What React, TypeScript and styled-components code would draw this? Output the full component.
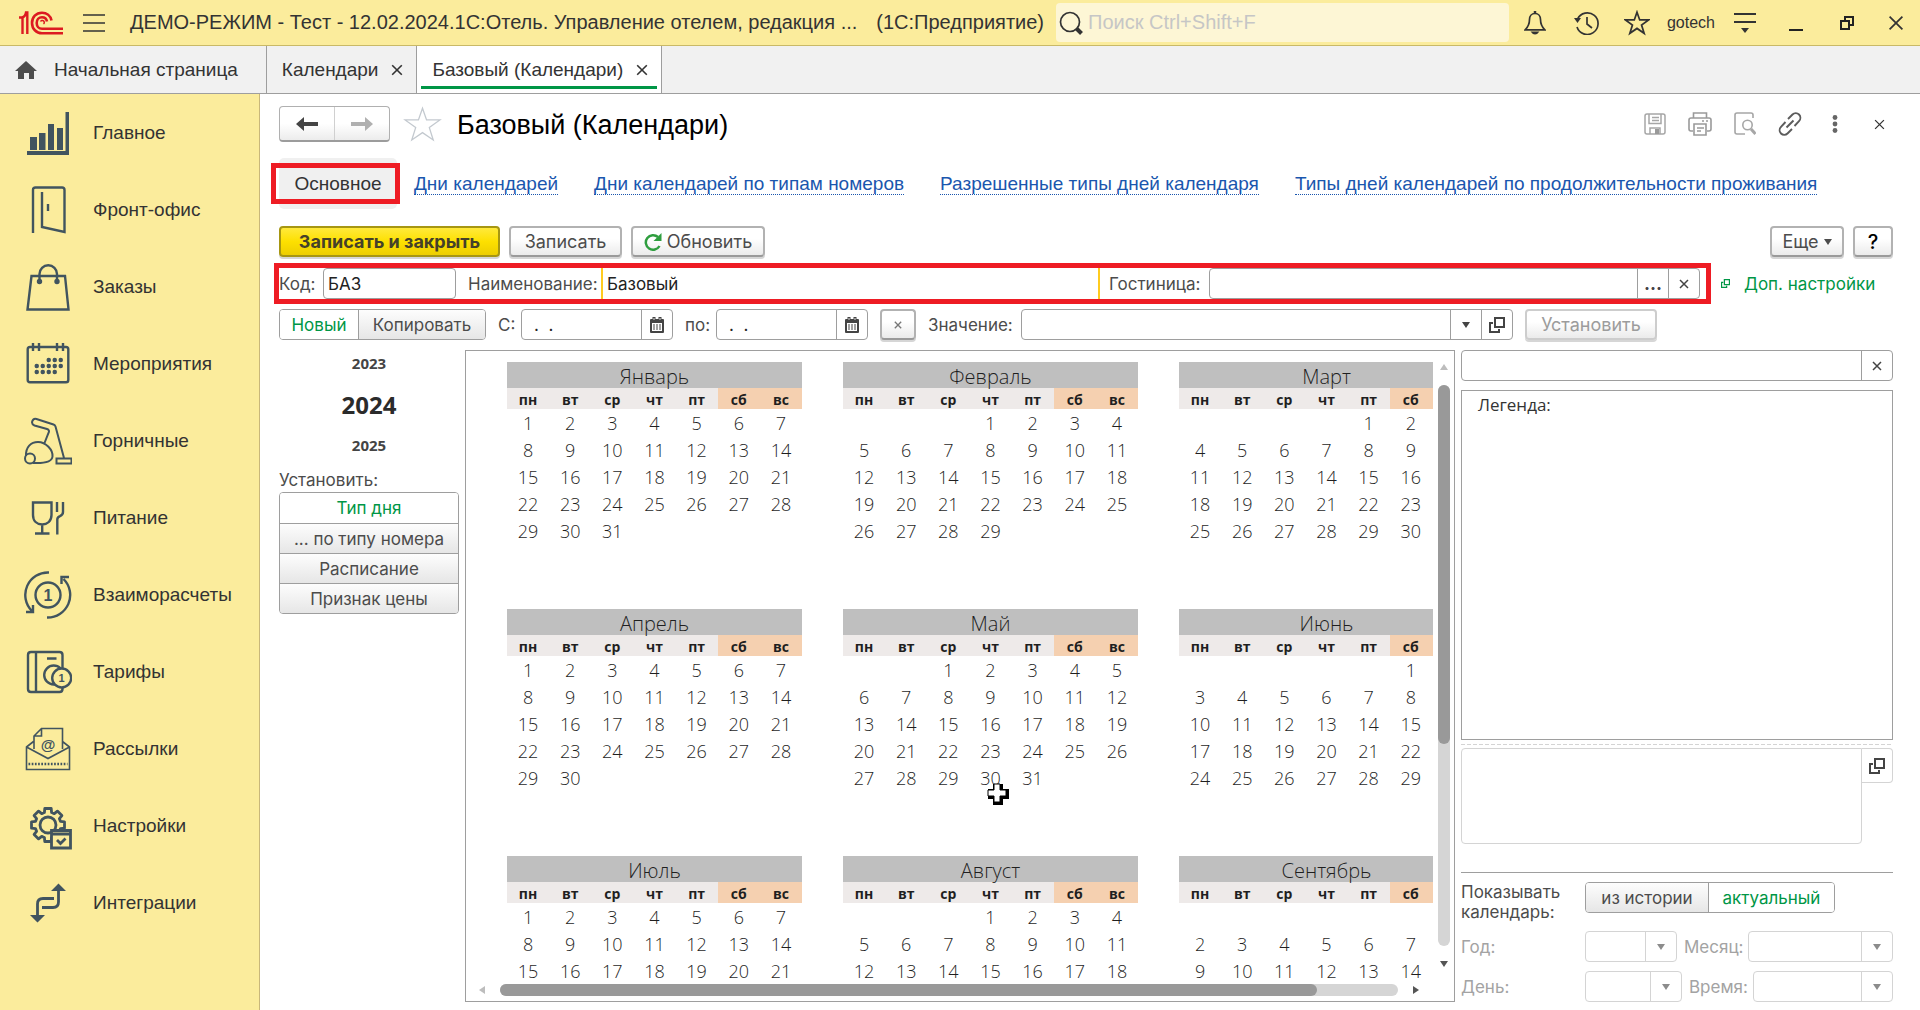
import React from 'react';
import styled, { createGlobalStyle, css } from 'styled-components';

const ui = '"Liberation Sans", Arial, sans-serif';
const form = 'Inter, "Liberation Sans", sans-serif';
const sheet = '"Open Sans", "Noto Sans", sans-serif';

const c = {
  yellow: '#fbec9c',
  line: '#9e9e9e',
  soft: '#d4d4d4',
  text: '#333333',
  label: '#4c4c4c',
  green: '#009646',
  icon: '#41545f',
  red: '#ee1c24',
};

const GlobalStyle = createGlobalStyle`
  *, *::before, *::after { box-sizing: border-box; }
  body { margin: 0; background: #fff; color: ${c.text}; font-family: ${ui}; font-size: 19px; }
  button, input, select, textarea { font: inherit; color: inherit; margin: 0; }
  button { cursor: pointer; }
`;

const Page = styled.div`
  display: flex;
  flex-direction: column;
  height: 100vh;
  min-height: 900px;
  overflow: hidden;
`;

/* ---------- title bar ---------- */

const TitleBar = styled.header`
  display: flex;
  align-items: center;
  flex: none;
  height: 46px;
  padding-left: 18px;
  background: ${c.yellow};
  border-bottom: 1px solid #c9b967;
`;

const IconButton = styled.button<{ $w?: number }>`
  display: flex;
  flex: none;
  align-items: center;
  justify-content: center;
  width: ${(p) => p.$w ?? 51}px;
  height: 36px;
  padding: 0;
  border: 0;
  background: none;
  color: ${c.text};
`;

const AppTitle = styled.div`
  display: flex;
  flex: none;
  gap: 19px;
  margin: 0 12px 0 6px;
  font-size: 20px;
  white-space: nowrap;
`;

const Search = styled.label`
  display: flex;
  flex: 1;
  align-items: center;
  gap: 3px;
  min-width: 0;
  height: 39px;
  margin-right: 1px;
  padding-left: 3px;
  border-radius: 4px;
  background: #fdf6d5;
`;

const SearchInput = styled.input`
  flex: 1;
  min-width: 0;
  border: 0;
  outline: 0;
  background: none;
  font-size: 20px;
  &::placeholder { color: #c6c6c6; opacity: 1; }
`;

const UserName = styled.button`
  padding: 0 4px;
  border: 0;
  background: none;
  font-size: 16px;
`;

/* ---------- tabs ---------- */

const TabBar = styled.nav`
  display: flex;
  flex: none;
  height: 48px;
  background: #f1f1f1;
  border-bottom: 1px solid ${c.line};
`;

const Tab = styled.div<{ $active?: boolean; $home?: boolean }>`
  display: flex;
  align-items: center;
  gap: ${(p) => (p.$home ? 17 : 10)}px;
  padding: ${(p) => (p.$home ? '0 28px 0 15px' : '0 13px 0 15px')};
  border-right: 1px solid ${c.line};
  ${(p) => p.$active && css`
    background: #fff;
    box-shadow: inset 4px 0 #fff, inset -4px 0 #fff, inset 0 -4px #fff, inset 0 -7px ${c.green};
  `}
`;

const TabButton = styled.button`
  padding: 0;
  border: 0;
  background: none;
  font-size: 19px;
  white-space: nowrap;
`;

const TabClose = styled(TabButton)`
  display: flex;
  padding: 4px 0 4px 3px;
`;

/* ---------- side menu ---------- */

const Columns = styled.div`
  display: flex;
  flex: 1;
  min-height: 0;
`;

const SideMenu = styled.nav`
  flex: none;
  width: 260px;
  background: ${c.yellow};
  border-right: 1px solid #c9b77a;
`;

const SideItem = styled.a`
  display: flex;
  align-items: center;
  gap: 21px;
  height: 77px;
  padding-left: 24px;
  color: ${c.text};
  text-decoration: none;
  & svg { flex: none; }
`;

/* ---------- main area ---------- */

const Main = styled.main`
  display: flex;
  flex: 1;
  flex-direction: column;
  min-width: 0;
  padding: 12px 27px 8px 19px;
  font-family: ${form};
  font-size: 17px;
  color: ${c.label};
`;

const Heading = styled.div`
  display: flex;
  flex: none;
  align-items: center;
  height: 36px;
  margin-right: -9px;
  font-family: ${ui};
`;

const History = styled.div`
  display: flex;
  width: 111px;
  height: 36px;
  border: 1px solid #b0b0b0;
  border-bottom: 2px solid #9c9c9c;
  border-radius: 4px;
  background: linear-gradient(#fff 50%, #ececec);
`;

const HistoryButton = styled.button`
  display: flex;
  flex: 1;
  align-items: center;
  justify-content: center;
  padding: 0;
  border: 0;
  background: none;
  && + && { border-left: 1px solid #d0d0d0; }
`;

const Title = styled.h1`
  flex: 1;
  margin: 0 0 0 2px;
  padding-top: 2px;
  color: #000;
  font-size: 27px;
  font-weight: 400;
  line-height: 36px;
  white-space: nowrap;
`;

const LinkRow = styled.nav`
  display: flex;
  flex: none;
  align-items: center;
  gap: 36px;
  height: 51px;
  margin-top: 16px;
  font-family: ${ui};
  font-size: 19px;
  white-space: nowrap;
`;

const CurrentLink = styled.span`
  position: relative;
  width: 118px;
  margin-right: -19px;
  border-radius: 5px;
  background: #f0f0f0;
  color: #333;
  line-height: 51px;
  text-align: center;
  &::after {
    content: '';
    position: absolute;
    inset: 5px -3px 5px -8px;
    border: 5px solid ${c.red};
  }
`;

const SectionLink = styled.a`
  margin-top: 2px;
  border-bottom: 1px dotted #1a56ae;
  color: #1a56ae;
  line-height: 20px;
  text-decoration: none;
`;

const Toolbar = styled.div`
  display: flex;
  flex: none;
  align-items: flex-start;
  gap: 9px;
  height: 32px;
  margin-top: 17px;
`;

const Spacer = styled.span`
  flex: 1;
`;

const Button = styled.button<{ $w?: number; $primary?: boolean; $help?: boolean }>`
  display: inline-flex;
  flex: none;
  align-items: center;
  justify-content: center;
  gap: 5px;
  width: ${(p) => (p.$w ? `${p.$w}px` : 'auto')};
  height: 31px;
  padding: 0 4px;
  border: 2px solid #b2b2b2;
  border-bottom-color: #9a9a9a;
  border-radius: 4px;
  background: linear-gradient(#fff 40%, #ebebeb);
  box-shadow: 0 2px 0 #d6d6d6;
  color: ${(p) => (p.$help ? '#000' : c.label)};
  font-size: ${(p) => (p.$help ? 20 : 18)}px;
  font-weight: ${(p) => (p.$help ? 500 : 400)};
  white-space: nowrap;
  ${(p) => p.$primary && css`
    border-color: #a69612;
    background: linear-gradient(#ffe93c, #fde000 50%, #edce00);
    color: #45412a;
    font-weight: 700;
  `}
  &:disabled {
    border-color: #cdcdcd;
    color: #9c9c9c;
    cursor: default;
  }
`;

const FormRow = styled.div`
  display: flex;
  flex: none;
  align-items: center;
  height: 31px;
  margin-top: 10px;
`;

const Marked = styled.div`
  display: flex;
  flex: 1;
  align-items: center;
  min-width: 0;
  height: 31px;
  padding-right: 6px;
  outline: 5px solid ${c.red};
`;

const Label = styled.label<{ $w: number; $muted?: boolean }>`
  flex: none;
  width: ${(p) => p.$w}px;
  white-space: nowrap;
  color: ${(p) => (p.$muted ? '#a3a3a3' : 'inherit')};
`;

const Field = styled.div<{ $w?: number; $muted?: boolean; $required?: boolean }>`
  display: flex;
  flex: ${(p) => (p.$w ? 'none' : '1')};
  width: ${(p) => (p.$w ? `${p.$w}px` : 'auto')};
  min-width: 0;
  height: 31px;
  border: 1px solid ${(p) => (p.$muted ? c.soft : c.line)};
  border-radius: 4px;
  background: #fff;
  ${(p) => p.$required && css`
    border: solid #ffcb1f;
    border-width: 0 2px;
    border-radius: 0;
  `}
`;

const Input = styled.input`
  flex: 1;
  width: 0;
  min-width: 0;
  padding: 0 4px;
  border: 0;
  outline: 0;
  background: none;
  color: #222;
`;

const DateInput = styled(Input)`
  padding: 0 12px;
`;

const Select = styled.select`
  flex: 1;
  width: 0;
  min-width: 0;
  padding: 0 6px;
  border: 0;
  outline: 0;
  background: none;
  appearance: none;
`;

const FieldButton = styled.button<{ $muted?: boolean }>`
  display: flex;
  flex: none;
  align-items: center;
  justify-content: center;
  width: 31px;
  padding: 0;
  border: 0;
  border-left: 1px solid ${(p) => (p.$muted ? c.soft : c.line)};
  background: none;
  color: ${(p) => (p.$muted ? '#8c8c8c' : '#444')};
`;

const Ellipsis = styled.span`
  font-size: 18px;
  font-weight: 700;
`;

const Segments = styled.div<{ $vertical?: boolean }>`
  display: flex;
  flex: none;
  flex-direction: ${(p) => (p.$vertical ? 'column' : 'row')};
  overflow: hidden;
  border: 1px solid ${c.line};
  border-radius: 4px;
  && > * + * { border-${(p) => (p.$vertical ? 'top' : 'left')}: 1px solid ${c.line}; }
`;

const Segment = styled.button<{ $w?: number; $on?: boolean }>`
  width: ${(p) => (p.$w ? `${p.$w}px` : 'auto')};
  height: ${(p) => (p.$w ? 29 : 30)}px;
  padding: 0;
  border: 0;
  background: ${(p) => (p.$on ? '#fff' : 'linear-gradient(#fdfdfd, #e6e6e6)')};
  color: ${(p) => (p.$on ? c.green : c.label)};
  white-space: nowrap;
`;

const MoreLink = styled.a`
  display: flex;
  flex: none;
  align-items: center;
  gap: 14px;
  width: 187px;
  padding-left: 15px;
  color: ${c.green};
  line-height: 28px;
  text-decoration: none;
  white-space: nowrap;
`;

/* ---------- body ---------- */

const Body = styled.div`
  display: grid;
  flex: 1;
  grid-template-columns: 180px minmax(0, 1fr) 432px;
  gap: 6px;
  min-height: 0;
  margin-top: 10px;
`;

const YearColumn = styled.div`
  display: flex;
  flex-direction: column;
`;

const Year = styled.button<{ $current?: boolean }>`
  height: ${(p) => (p.$current ? 56 : 26)}px;
  padding: 0;
  border: 0;
  background: none;
  color: ${(p) => (p.$current ? '#2b2b2b' : '#444')};
  font-family: ${sheet};
  font-size: ${(p) => (p.$current ? 24 : 15)}px;
  font-weight: 700;
`;

const GroupLabel = styled.div`
  margin: 12px 0 2px;
  line-height: 20px;
`;

const CalendarPanel = styled.section`
  display: grid;
  grid-template-columns: minmax(0, 1fr) 21px;
  grid-template-rows: minmax(0, 1fr) 17px;
  min-height: 0;
  border: 1px solid ${c.line};
`;

const Viewport = styled.div`
  position: relative;
  overflow: hidden;
  padding: 11px 0 0 41px;
`;

const Months = styled.div`
  display: grid;
  grid-template-columns: repeat(3, 295px);
  grid-auto-rows: 209px;
  gap: 38px 41px;
  align-items: start;
  font-family: ${sheet};
`;

const MonthTable = styled.table`
  width: 295px;
  border-collapse: collapse;
  border-spacing: 0;
  table-layout: fixed;
  color: #1f1f1f;
  & caption {
    height: 26px;
    background: #bfbfbf;
    font-size: 20px;
    font-weight: 300;
    line-height: 29px;
  }
`;

const WeekDay = styled.th<{ $weekend: boolean }>`
  height: 21px;
  padding: 2px 0 0;
  background: ${(p) => (p.$weekend ? '#f5d0b0' : '#eeeae9')};
  font-size: 14px;
  font-weight: 700;
  line-height: 19px;
`;

const Day = styled.td`
  height: 27px;
  padding: 2px 0 0;
  font-size: 18px;
  font-weight: 300;
  line-height: 25px;
  text-align: center;
`;

const Pointer = styled.svg`
  position: absolute;
  left: 521px;
  top: 432px;
`;

const ScrollBar = styled.div<{ $horizontal?: boolean }>`
  display: flex;
  flex-direction: ${(p) => (p.$horizontal ? 'row' : 'column')};
  align-items: ${(p) => (p.$horizontal ? 'flex-start' : 'center')};
  gap: 14px;
  padding: ${(p) => (p.$horizontal ? '0 13px 0 12px' : '12px 0 16px')};
  & > svg { flex: none; }
`;

const Track = styled.div<{ $horizontal?: boolean; $share: number }>`
  flex: 1;
  width: ${(p) => (p.$horizontal ? 'auto' : '12px')};
  height: ${(p) => (p.$horizontal ? '12px' : 'auto')};
  border-radius: 6px;
  background: #d5d5d5;
  &::before {
    content: '';
    display: block;
    width: ${(p) => (p.$horizontal ? `${p.$share}%` : '12px')};
    height: ${(p) => (p.$horizontal ? '12px' : `${p.$share}%`)};
    border-radius: 6px;
    background: #999;
  }
`;

const SidePanel = styled.aside`
  display: flex;
  flex-direction: column;
  min-height: 0;
`;

const Legend = styled.div`
  flex: 1;
  margin-top: 9px;
  padding: 1px 16px;
  border: 1px solid ${c.line};
  color: #333;
  font-family: ${sheet};
  line-height: 26px;
`;

const Splitter = styled.div`
  flex: none;
  height: 1px;
  margin: 4px 0 3px;
  background: repeating-linear-gradient(90deg, ${c.soft} 0 4px, transparent 4px 6px);
`;

const NoteRow = styled.div`
  display: flex;
  flex: none;
  align-items: flex-start;
  height: 96px;
`;

const Note = styled.textarea`
  flex: 1;
  height: 96px;
  border: 1px solid ${c.soft};
  border-radius: 4px 0 4px 4px;
  outline: 0;
  resize: none;
`;

const NoteButton = styled.button`
  display: flex;
  align-items: center;
  justify-content: center;
  width: 31px;
  height: 35px;
  padding: 0;
  border: 1px solid ${c.soft};
  border-left: 0;
  border-radius: 0 4px 4px 0;
  background: none;
  color: #444;
`;

const Rule = styled.hr`
  flex: none;
  width: 100%;
  height: 1px;
  margin: 28px 0 9px;
  border: 0;
  background: ${c.line};
`;

const ShowRow = styled.div`
  display: flex;
  flex: none;
  align-items: flex-start;
  height: 49px;
`;

const ShowLabel = styled.div`
  width: 124px;
  line-height: 20px;
`;

const ParamRow = styled.div`
  display: flex;
  flex: none;
  align-items: center;
  height: 31px;
  & + & { margin-top: 9px; }
`;

const NamePad = styled.span`
  padding-left: 12px;
`;

const HotelPad = styled.span`
  padding-left: 9px;
`;

const GapLabel = styled(Label)`
  padding-left: 12px;
`;

const ParamLabel = styled(Label)`
  padding-left: 7px;
`;

const ClearButton = styled(Button)`
  margin: 0 12px;
  color: #777;
`;

const ApplyButton = styled(Button)`
  margin-left: 12px;
`;

const ScrollArrow = styled.span`
  display: flex;
  align-items: center;
  height: 12px;
`;

const FilterField = styled(Field)`
  flex: none;
`;

/* ---------- icons ---------- */

type Dir = 'up' | 'down' | 'left' | 'right';
const turn: Record<Dir, number> = { down: 0, left: 90, up: 180, right: 270 };

const Caret = ({ dir = 'down', color = 'currentColor', size = 8 }: { dir?: Dir; color?: string; size?: number }) => (
  <svg width={size} height={size} viewBox="0 0 8 8">
    <path d="M0 1h8L4 7z" fill={color} transform={`rotate(${turn[dir]} 4 4)`} />
  </svg>
);

const Cross = ({ size = 12, width = 2 }: { size?: number; width?: number }) => (
  <svg width={size} height={size} viewBox="0 0 12 12" fill="none" stroke="currentColor" strokeWidth={width}>
    <path d="M1.2 1.2l9.6 9.6M10.8 1.2l-9.6 9.6" />
  </svg>
);

const OpenIcon = ({ size = 16, width = 2 }: { size?: number; width?: number }) => (
  <svg width={size} height={size} viewBox="0 0 16 16" fill="none" stroke="currentColor" strokeWidth={width}>
    <path d="M6 1h9v9H6zM4 6H1v9h9v-3" />
  </svg>
);

const CalendarIcon = () => (
  <svg width="14" height="16" viewBox="0 0 14 16">
    <path d="M1 2h12q1 0 1 1v12q0 1-1 1H1q-1 0-1-1V3q0-1 1-1z" fill="#444" />
    <path d="M2 6h10v8H2z" fill="#fff" />
    <path d="M2.500 0h3v4h-3zM8.500 0h3v4h-3z" fill="#444" />
    <path d="M4 1v2M10 1v2" stroke="#ddd" strokeWidth="1" />
    <path d="M3 8h2M6 8h2M9 8h2M3 10h2M6 10h2M9 10h2M3 12h2M6 12h2M9 12h2" stroke="#444" strokeWidth="1.2" />
  </svg>
);

const Logo = () => (
  <svg width="46" height="24" viewBox="0 0 46 24" fill="none" stroke="#dc1a21" strokeWidth="2.600">
    <path d="M1 6.500h3.500V23M4 6.500C6 6 7.500 4.500 8 1.500h1.300V23" strokeWidth="2.400" />
    <path d="M33.500 9.500C32.500 4.500 28.500 1.700 24 1.700c-6 0-10 4.500-10 10.200 0 5.800 4.300 10.300 10 10.300h21" />
    <path d="M29 10.500c-.5-2.700-2.500-4.300-5-4.300-3.200 0-5.300 2.500-5.300 5.700 0 3.300 2.200 5.800 5.300 5.800h21" />
    <path d="M22.500 10.500a2 2 0 1 1 3 2.500" strokeWidth="1.500" />
  </svg>
);

const Burger = () => (
  <svg width="22" height="18" viewBox="0 0 22 18" stroke="#333" strokeWidth="1.600">
    <path d="M0 1h22M0 9h22M0 17h22" />
  </svg>
);

const SearchIcon = () => (
  <svg width="24" height="24" viewBox="0 0 24 24" fill="none" stroke="#333">
    <circle cx="11" cy="11" r="9.500" strokeWidth="1.700" />
    <path d="M17.500 17.500l5 5" strokeWidth="4" />
  </svg>
);

const Bell = () => (
  <svg width="22" height="24" viewBox="0 0 22 24" fill="none" stroke="#333" strokeWidth="1.700">
    <path d="M11 2.500c-3.500 0-5.500 2.500-5.500 6 0 5.500-1.500 7.500-4.300 10.300h19.600c-2.800-2.800-4.300-4.800-4.300-10.300 0-3.500-2-6-5.500-6z" />
    <path d="M11 0v3" strokeWidth="2.500" />
    <path d="M6.500 20.500h9q-2 3-4.500 3t-4.500-3z" fill="#333" stroke="none" />
  </svg>
);

const Clock = () => (
  <svg width="25" height="24" viewBox="0 0 25 24" fill="none" stroke="#333" strokeWidth="1.700">
    <path d="M3.500 8A10.800 10.800 0 1 1 3 16" />
    <path d="M0 7h7l-3.500 5z" fill="#333" stroke="none" />
    <path d="M13 6v7l5 4" />
  </svg>
);

const StarIcon = ({ size, color, width }: { size: number; color: string; width: number }) => (
  <svg width={size} height={size} viewBox="0 0 24 24" fill="none" stroke={color} strokeWidth={width}>
    <path d="M12 2l2.500 7.200h8.200l-6.500 4.700 2.400 7.600L12 17l-6.600 4.500 2.400-7.600-6.500-4.700h8.200z" />
  </svg>
);

const ViewMenu = () => (
  <svg width="22" height="22" viewBox="0 0 22 22" fill="none" stroke="#333" strokeWidth="1.800">
    <path d="M0 2h22M0 10h22" />
    <path d="M7 16h8l-4 5z" fill="#333" stroke="none" />
  </svg>
);

const Minimize = () => (
  <svg width="14" height="16" viewBox="0 0 14 16"><path d="M0 14h14v2H0z" fill="#222" /></svg>
);

const Restore = () => (
  <svg width="14" height="14" viewBox="0 0 14 14" fill="none" stroke="#222" strokeWidth="2">
    <path d="M1 5h8v8H1zM5 5V1h8v8H9" />
  </svg>
);

const Home = () => (
  <svg width="22" height="18" viewBox="0 0 22 18"><path d="M11 0l11 10h-3v8h-5v-6H9v6H3v-8H0z" fill="#4d4d4d" /></svg>
);

const Arrow = ({ back }: { back?: boolean }) => (
  <svg width="22" height="14" viewBox="0 0 22 14">
    <path d="M0 7l8-7v5h14v4H8v5z" fill={back ? '#444' : '#b0b0b0'} transform={back ? undefined : 'rotate(180 11 7)'} />
  </svg>
);

const Save = () => (
  <svg width="22" height="22" viewBox="0 0 22 22" fill="none" stroke="#a6a6a6" strokeWidth="1.500">
    <path d="M3 1h16q2 0 2 2v16q0 2-2 2H3q-2 0-2-2V3q0-2 2-2z" />
    <path d="M5 1v9.500h12V1M8 4.500h7M8 7.500h7M6 21v-6h10v6" />
    <path d="M11 16h4v5h-4z" fill="#999" stroke="none" />
  </svg>
);

const Print = () => (
  <svg width="24" height="24" viewBox="0 0 24 24" fill="none" stroke="#9a9a9a" strokeWidth="1.600">
    <path d="M5.500 6V1h13v5M5 19H3q-2 0-2-2V8q0-2 2-2h18q2 0 2 2v9q0 2-2 2h-2" />
    <path d="M6 12h12v11H6zM9 16h7M9 19h4M14 9h2M18 9h2" />
  </svg>
);

const Preview = () => (
  <svg width="22" height="24" viewBox="0 0 22 24" fill="none" stroke="#a6a6a6" strokeWidth="1.600">
    <path d="M19 6V3q0-2-2-2H3Q1 1 1 3v17q0 2 2 2h8" />
    <circle cx="13.500" cy="13" r="4.700" />
    <path d="M17 17l4.500 5" strokeWidth="3" />
  </svg>
);

const Chain = () => (
  <svg width="24" height="24" viewBox="0 0 24 24" fill="none" stroke="#5c5c5c" strokeWidth="1.900">
    <path d="M10 7l4.500-4.500a4.500 4.500 0 0 1 6.500 0 4.800 4.800 0 0 1 0 6.700L16.500 14" />
    <path d="M14 17l-4.500 4.500a4.500 4.500 0 0 1-6.500 0 4.800 4.800 0 0 1 0-6.700L7.500 10" />
    <path d="M8.500 15.500l7-7" />
  </svg>
);

const Dots = () => (
  <svg width="6" height="18" viewBox="0 0 6 18" fill="#666">
    <circle cx="3" cy="2.500" r="2.400" /><circle cx="3" cy="9" r="2.400" /><circle cx="3" cy="15.500" r="2.400" />
  </svg>
);

const Refresh = () => (
  <svg width="18" height="18" viewBox="0 0 18 18" fill="none" stroke="#2f9e3f" strokeWidth="2.500">
    <path d="M15.500 13A7.300 7.300 0 1 1 14 4" />
    <path d="M17.500 0v8h-8z" fill="#2f9e3f" stroke="none" />
  </svg>
);

const BigIcon = ({ children, width = 2.400 }: { children: React.ReactNode; width?: number }) => (
  <svg width="48" height="48" viewBox="0 0 48 48" fill="none" stroke={c.icon} strokeWidth={width}>{children}</svg>
);

const GlyphText = ({ x, y, size, children }: { x: number; y: number; size: number; children: string }) => (
  <text x={x} y={y} fontSize={size} fontWeight="700" fontFamily="Liberation Sans, sans-serif" textAnchor="middle" fill={c.icon} stroke="none">
    {children}
  </text>
);

const gear = Array.from({ length: 8 }, (_, i) => {
  const p = (r: number, deg: number) => {
    const a = ((i * 45 + deg - 90) * Math.PI) / 180;
    return `${(24 + r * Math.cos(a)).toFixed(1)} ${(23 + r * Math.sin(a)).toFixed(1)}`;
  };
  return `${i ? 'L' : 'M'}${p(16.8, -11)}L${p(16.8, 11)}L${p(13, 16)}L${p(13, 29)}`;
}).join('') + 'z';

const menu: { name: string; icon: React.ReactNode }[] = [
  {
    name: 'Главное',
    icon: (
      <BigIcon>
        <path d="M3 42h38.500V3H45v43H3zM6 28h7v13H6zM15 24h6.500v17H15zM24 15h6v26h-6zM33 19h6v22h-6z" fill={c.icon} stroke="none" />
      </BigIcon>
    ),
  },
  { name: 'Фронт-офис', icon: <BigIcon><path d="M9 47V4q0-2.500 2.500-2.500H38q2.500 0 2.500 2.500v42L18 41V6M24 18v7" /></BigIcon> },
  {
    name: 'Заказы',
    icon: (
      <BigIcon>
        <path d="M7.500 13h33.500L44.500 46.500h-41z" />
        <path d="M15.500 19v-8a8.700 8.700 0 0 1 17.500 0v8" />
        <circle cx="15.500" cy="18.500" r="1.500" /><circle cx="33" cy="18.500" r="1.500" />
      </BigIcon>
    ),
  },
  {
    name: 'Мероприятия',
    icon: (
      <BigIcon>
        <path d="M6 7h36q2.300 0 2.300 2.300V40q0 2.300-2.300 2.300H6q-2.300 0-2.300-2.300V9.300Q3.700 7 6 7zM9 3v8M15 3v8M33 3v8M39 3v8" />
        <path d="M24.700 20h14M12.700 26h26M12.700 32h20" strokeWidth="4.400" strokeDasharray="0.100 5.900" strokeLinecap="round" />
      </BigIcon>
    ),
  },
  {
    name: 'Горничные',
    icon: (
      <BigIcon width={2}>
        <path d="M2 39c-.5-9 5-14 12-14 8 0 15 8 14.500 14.500C28 45 20 46.500 9 46" />
        <circle cx="6" cy="41.500" r="5" />
        <path d="M40 41L31.500 9.500q-.5-1.500-2-2L12.500 2C8.500 1 6 6.500 10.500 8.500L23 12q3 1 1.500 4L20.500 26M32.500 41.500h15v5h-15z" />
      </BigIcon>
    ),
  },
  {
    name: 'Питание',
    icon: (
      <BigIcon>
        <path d="M9 8.500h18.500V21c0 6-4 9.500-9.300 9.500S9 27 9 21zM18.200 30.500V39M11 39.500h14.500M33 8v10M39 8v10c0 2-1.500 3.500-3 4.200q-2.700 1-2.700 3.300v15" />
      </BigIcon>
    ),
  },
  {
    name: 'Взаиморасчеты',
    icon: (
      <BigIcon>
        <path d="M25 1.500A22.500 22.500 0 0 0 8 40M23 46.500A22.500 22.500 0 0 0 39.500 8M2 41h7v-7M45 6h-7.500v7" />
        <circle cx="24" cy="24" r="12.500" />
        <GlyphText x={24} y={30} size={16}>1</GlyphText>
      </BigIcon>
    ),
  },
  {
    name: 'Тарифы',
    icon: (
      <BigIcon>
        <path d="M7 4h28.500q3 0 3 3v34q0 3-3 3H7q-3 0-3-3V7q0-3 3-3zM12 4v40M23 10.500h9.500" />
        <circle cx="29.700" cy="27" r="9.500" fill={c.yellow} /><circle cx="37.700" cy="30" r="9.500" fill={c.yellow} />
        <GlyphText x={37.5} y={34} size={11}>1</GlyphText>
      </BigIcon>
    ),
  },
  {
    name: 'Рассылки',
    icon: (
      <BigIcon width={1.600}>
        <path d="M9.500 16.500L2.500 22v22.500h43V22l-7-5.500M2.500 22L24 33.500 45.500 22M10 24V11l7.500-7.500h21V24M10 11h7.500V3.500" />
        <path d="M4.500 39h39" strokeWidth="2.500" strokeDasharray="1.700 1.500" />
        <GlyphText x={24} y={25} size={15}>@</GlyphText>
      </BigIcon>
    ),
  },
  {
    name: 'Настройки',
    icon: (
      <BigIcon width={2.800}>
        <path d={gear} strokeLinejoin="round" />
        <circle cx="24" cy="23" r="8" />
        <path d="M27.500 28.500h19v17.500h-19zM27.500 32h19" fill={c.yellow} />
        <path d="M33 38l3.500 3.500 5-5" />
      </BigIcon>
    ),
  },
  {
    name: 'Интеграции',
    icon: (
      <BigIcon width={2.800}>
        <path d="M34.500 11v12q0 5.500-5.500 5.500H18M13.500 37V25q0-5.500 5.500-5.500h11" />
        <path d="M34.500 4.500L42 12H27zM13.500 43.500L6 36h15z" fill={c.icon} stroke="none" />
      </BigIcon>
    ),
  },
];

/* ---------- calendar data ---------- */

const weekDays = ['пн', 'вт', 'ср', 'чт', 'пт', 'сб', 'вс'];

const months: { name: string; offset: number; days: number }[] = [
  { name: 'Январь', offset: 0, days: 31 },
  { name: 'Февраль', offset: 3, days: 29 },
  { name: 'Март', offset: 4, days: 31 },
  { name: 'Апрель', offset: 0, days: 30 },
  { name: 'Май', offset: 2, days: 31 },
  { name: 'Июнь', offset: 5, days: 30 },
  { name: 'Июль', offset: 0, days: 31 },
  { name: 'Август', offset: 3, days: 31 },
  { name: 'Сентябрь', offset: 6, days: 30 },
];

const Month = ({ name, offset, days }: { name: string; offset: number; days: number }) => {
  const weeks = Math.ceil((offset + days) / 7);
  return (
    <MonthTable>
      <caption>{name}</caption>
      <thead>
        <tr>{weekDays.map((d, i) => <WeekDay key={d} $weekend={i > 4} scope="col">{d}</WeekDay>)}</tr>
      </thead>
      <tbody>
        {Array.from({ length: weeks }, (_, w) => (
          <tr key={w}>
            {weekDays.map((d, i) => {
              const n = w * 7 + i - offset + 1;
              return <Day key={d}>{n > 0 && n <= days ? n : null}</Day>;
            })}
          </tr>
        ))}
      </tbody>
    </MonthTable>
  );
};

const DateField = ({ id }: { id: string }) => (
  <Field $w={152}>
    <DateInput id={id} defaultValue=".  ." />
    <FieldButton aria-label="Выбрать дату"><CalendarIcon /></FieldButton>
  </Field>
);

const Combo = ({ id, w }: { id: string; w?: number }) => (
  <Field $w={w} $muted>
    <Select id={id} disabled><option value="" /></Select>
    <FieldButton $muted disabled aria-label="Открыть список"><Caret /></FieldButton>
  </Field>
);

export default function App() {
  return (
    <Page>
      <GlobalStyle />
      <TitleBar>
        <Logo />
        <IconButton $w={60} aria-label="Меню"><Burger /></IconButton>
        <AppTitle>
          <span>ДЕМО-РЕЖИМ - Тест - 12.02.2024.1С:Отель. Управление отелем, редакция ...</span>
          <span>(1С:Предприятие)</span>
        </AppTitle>
        <Search>
          <SearchIcon />
          <SearchInput placeholder="Поиск Ctrl+Shift+F" aria-label="Поиск" />
        </Search>
        <IconButton aria-label="Уведомления"><Bell /></IconButton>
        <IconButton aria-label="История"><Clock /></IconButton>
        <IconButton aria-label="Избранное"><StarIcon size={26} color="#333" width={1.600} /></IconButton>
        <UserName>gotech</UserName>
        <IconButton aria-label="Вид"><ViewMenu /></IconButton>
        <IconButton aria-label="Свернуть"><Minimize /></IconButton>
        <IconButton aria-label="Восстановить"><Restore /></IconButton>
        <IconButton $w={48} aria-label="Закрыть"><Cross size={16} width={1.300} /></IconButton>
      </TitleBar>

      <TabBar>
        <Tab $home><Home /><TabButton>Начальная страница</TabButton></Tab>
        <Tab>
          <TabButton>Календари</TabButton>
          <TabClose aria-label="Закрыть вкладку"><Cross size={12} width={1.600} /></TabClose>
        </Tab>
        <Tab $active>
          <TabButton>Базовый (Календари)</TabButton>
          <TabClose aria-label="Закрыть вкладку"><Cross size={12} width={1.600} /></TabClose>
        </Tab>
      </TabBar>

      <Columns>
        <SideMenu>
          {menu.map((m) => <SideItem key={m.name} href="#">{m.icon}{m.name}</SideItem>)}
        </SideMenu>

        <Main>
          <Heading>
            <History>
              <HistoryButton aria-label="Назад"><Arrow back /></HistoryButton>
              <HistoryButton aria-label="Вперед"><Arrow /></HistoryButton>
            </History>
            <IconButton $w={65} aria-label="В избранное"><StarIcon size={39} color="#c3c9cf" width={0.800} /></IconButton>
            <Title>Базовый (Календари)</Title>
            <IconButton $w={45} aria-label="Сохранить"><Save /></IconButton>
            <IconButton $w={45} aria-label="Печать"><Print /></IconButton>
            <IconButton $w={45} aria-label="Просмотр"><Preview /></IconButton>
            <IconButton $w={45} aria-label="Ссылка"><Chain /></IconButton>
            <IconButton $w={45} aria-label="Еще"><Dots /></IconButton>
            <IconButton $w={45} aria-label="Закрыть форму"><Cross size={11} width={1.400} /></IconButton>
          </Heading>

          <LinkRow>
            <CurrentLink>Основное</CurrentLink>
            <SectionLink href="#">Дни календарей</SectionLink>
            <SectionLink href="#">Дни календарей по типам номеров</SectionLink>
            <SectionLink href="#">Разрешенные типы дней календаря</SectionLink>
            <SectionLink href="#">Типы дней календарей по продолжительности проживания</SectionLink>
          </LinkRow>

          <Toolbar>
            <Button $primary $w={221}>Записать и закрыть</Button>
            <Button $w={113}>Записать</Button>
            <Button $w={134}><Refresh />Обновить</Button>
            <Spacer />
            <Button $w={74}>Еще <Caret /></Button>
            <Button $w={40} $help>?</Button>
          </Toolbar>

          <FormRow>
            <Marked>
              <Label $w={44} htmlFor="code">Код:</Label>
              <Field $w={133}><Input id="code" defaultValue="БАЗ" /></Field>
              <Label $w={145} htmlFor="name"><NamePad>Наименование:</NamePad></Label>
              <Field $required $w={499}><Input id="name" defaultValue="Базовый" /></Field>
              <Label $w={109} htmlFor="hotel"><HotelPad>Гостиница:</HotelPad></Label>
              <Field>
                <Input id="hotel" />
                <FieldButton aria-label="Выбрать"><Ellipsis>...</Ellipsis></FieldButton>
                <FieldButton aria-label="Очистить"><Cross size={10} width={1.800} /></FieldButton>
              </Field>
            </Marked>
            <MoreLink href="#"><OpenIcon size={9} width={2.200} />Доп. настройки</MoreLink>
          </FormRow>

          <FormRow>
            <Segments>
              <Segment $w={78} $on>Новый</Segment>
              <Segment $w={127}>Копировать</Segment>
            </Segments>
            <GapLabel $w={35} htmlFor="from">С:</GapLabel>
            <DateField id="from" />
            <GapLabel $w={43} htmlFor="to">по:</GapLabel>
            <DateField id="to" />
            <ClearButton $w={36} aria-label="Очистить период"><Cross size={8} width={2} /></ClearButton>
            <Label $w={93} htmlFor="value">Значение:</Label>
            <Field $w={492}>
              <Input id="value" />
              <FieldButton aria-label="Открыть список"><Caret /></FieldButton>
              <FieldButton aria-label="Открыть"><OpenIcon /></FieldButton>
            </Field>
            <ApplyButton $w={132} disabled>Установить</ApplyButton>
          </FormRow>

          <Body>
            <YearColumn>
              <Year>2023</Year>
              <Year $current>2024</Year>
              <Year>2025</Year>
              <GroupLabel>Установить:</GroupLabel>
              <Segments $vertical>
                <Segment $on>Тип дня</Segment>
                <Segment>... по типу номера</Segment>
                <Segment>Расписание</Segment>
                <Segment>Признак цены</Segment>
              </Segments>
            </YearColumn>

            <CalendarPanel>
              <Viewport>
                <Months>{months.map((m) => <Month key={m.name} {...m} />)}</Months>
                <Pointer width="22" height="22" viewBox="0 0 22 22">
                  <path d="M7 2h8v5h6v8h-6v6H7v-6H2V7h5z" fill="#000" stroke="#000" strokeWidth="2" />
                  <path d="M7 1h6v6h6v6h-6v6H7v-6H1V7h6z" fill="#fff" stroke="#000" strokeWidth="1" />
                </Pointer>
              </Viewport>
              <ScrollBar>
                <Caret dir="up" color="#bdbdbd" />
                <Track $share={64} />
                <Caret color="#555" />
              </ScrollBar>
              <ScrollBar $horizontal>
                <ScrollArrow><Caret dir="left" color="#bdbdbd" /></ScrollArrow>
                <Track $horizontal $share={91} />
                <ScrollArrow><Caret dir="right" color="#555" /></ScrollArrow>
              </ScrollBar>
            </CalendarPanel>

            <SidePanel>
              <FilterField>
                <Input aria-label="Значение легенды" />
                <FieldButton aria-label="Очистить"><Cross size={10} width={1.800} /></FieldButton>
              </FilterField>
              <Legend>Легенда:</Legend>
              <Splitter />
              <NoteRow>
                <Note aria-label="Описание" />
                <NoteButton aria-label="Открыть"><OpenIcon /></NoteButton>
              </NoteRow>
              <Rule />
              <ShowRow>
                <ShowLabel>Показывать календарь:</ShowLabel>
                <Segments>
                  <Segment $w={122}>из истории</Segment>
                  <Segment $w={126} $on>актуальный</Segment>
                </Segments>
              </ShowRow>
              <ParamRow>
                <Label $muted $w={124} htmlFor="year">Год:</Label>
                <Combo id="year" w={92} />
                <ParamLabel $muted $w={71} htmlFor="month">Месяц:</ParamLabel>
                <Combo id="month" />
              </ParamRow>
              <ParamRow>
                <Label $muted $w={124} htmlFor="day">День:</Label>
                <Combo id="day" w={97} />
                <ParamLabel $muted $w={71} htmlFor="time">Время:</ParamLabel>
                <Combo id="time" />
              </ParamRow>
            </SidePanel>
          </Body>
        </Main>
      </Columns>
    </Page>
  );
}
